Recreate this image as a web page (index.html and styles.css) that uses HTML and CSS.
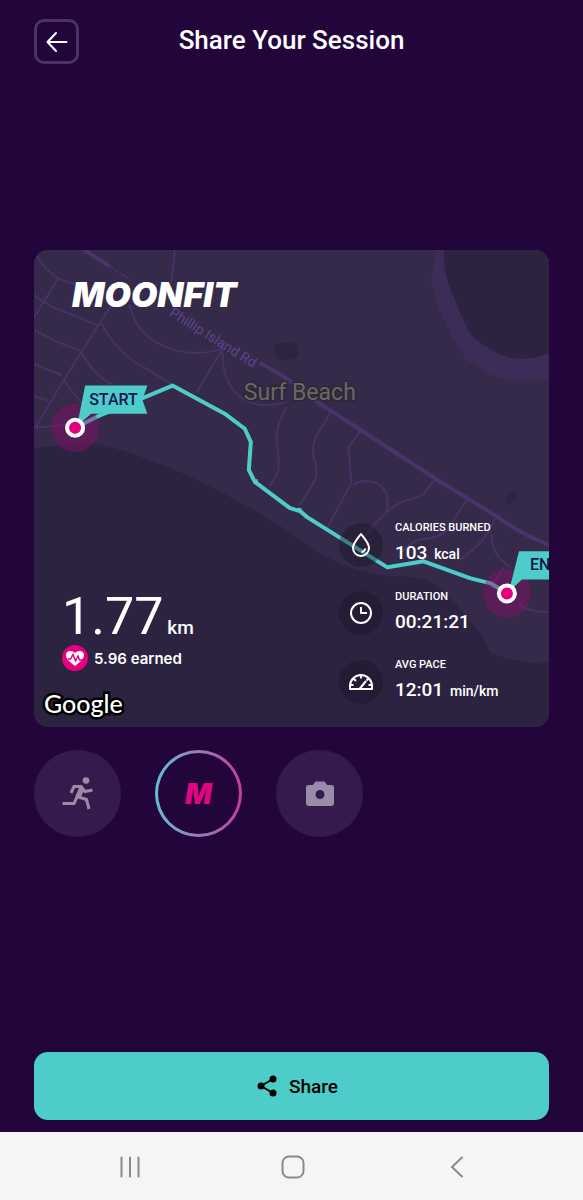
FILE: index.html
```html
<!DOCTYPE html>
<html lang="en">
<head>
    <meta charset="UTF-8">
    <meta name="viewport" content="width=device-width, initial-scale=1.0">
    <title>Share Your Session</title>
    <link rel="stylesheet" href="styles.css">
</head>
<body>

    <header class="header">
        <button class="back-btn" type="button" aria-label="Back">
            <svg width="24" height="24" viewBox="0 0 24 24"><path d="M21.5 12H2.5M11 3L2.5 12l8.500 9"/></svg>
        </button>
        <h1>Share Your Session</h1>
    </header>

    <main class="main">
        <!-- Session card -->
        <section class="card">
            <svg class="map" viewBox="0 0 515 475" preserveAspectRatio="xMidYMid slice">
                <!-- Water and park areas -->
                <path class="sea" d="M0 197L43 194Q60 191 80 197Q130 213 163 229Q209 251 256 281Q274 296 289 304Q320 321 356 325Q383 324 395 330Q414 341 429 362L446 382L456 402Q480 409 503 412L515 410V475H0Z"/>
                <path class="shore" d="M401 0L400 14L396 27L403 57L416 84L431 109L456 124Q470 130 486 131L515 128V0Z"/>
                <path class="sea" d="M409 0Q409 20 414 34L423 57L433 79Q436 86 444 91L456 99Q465 104 473 107Q484 109 493 108Q505 107 515 102V0Z"/>
                <rect class="pond" x="241" y="92" width="23" height="17" rx="7"/>
                <path class="pond" d="M471 253Q470 244 476 241Q482 239 482 245Q479 251 473 254Z"/>

                <!-- Roads -->
                <g class="roads">
                    <path d="M4 6Q19 31 43 34M26 27L0 69M0 44Q18 58 33 62L64 75M79 54Q64 76 48 102L31 129L3 176M0 79L23 91L48 101M0 113L29 125M0 145L15 150M0 177L34 174"/>
                    <path d="M68 73Q85 104 109 116Q129 128 139 134M48 102Q60 124 79 134M31 129Q40 145 54 157M141 0Q140 20 138 31"/>
                    <path d="M96 54Q104 90 143 100Q166 106 189 98L163 142M189 101Q188 131 206 146Q225 160 253 151M253 156Q240 177 243 194Q246 212 244 221L236 235"/>
                    <path d="M297 161L283 184Q277 194 280 207Q284 219 281 229L266 254M326 180L316 194Q313 198 315 206L317 232L293 277"/>
                    <path d="M319 234Q327 227 343 232Q357 241 352 261M400 229L389 243Q385 246 376 248Q360 253 353 261Q341 270 336 279L327 290M432 249L411 281Q400 288 386 288Q374 292 369 300M460 266Q459 276 443 294Q432 305 423 309M457 283Q457 306 476 316M469 316L456 336M483 352Q496 362 515 360"/>
                </g>
                <path class="main-road" d="M51 0L76 16M226 112L251 127L284 152L326 179L403 229L463 266Q484 282 515 294"/>
                <path class="dotted-road" d="M76 16L99 31"/>
                <text class="road-name" transform="translate(135 65) rotate(32)">Phillip Island Rd</text>
                <text class="place-name" x="210" y="149">Surf Beach</text>

                <!-- Route -->
                <path class="route" d="M42 177L66 165L108 148L139 135L191 163L211 178L217 191L215 219L221 231L256 257L266 260L273 266L353 316L389 310L436 327L456 332L472 342M221 231L224 230M265 260L266 257"/>
                <circle class="halo" cx="42" cy="177" r="24"/>
                <circle class="halo" cx="472" cy="342" r="24"/>
                <path class="flag" d="M52 135H114L109 149L114 163H58L44 175Z"/>
                <path class="flag" d="M484 300H546L541 314L546 328H487L474 340Z"/>
                <text class="flag-text" x="56" y="154">START</text>
                <text class="flag-text" x="495" y="319">END</text>
                <circle class="point" cx="42" cy="177" r="8"/>
                <circle class="point" cx="472" cy="342" r="8"/>
            </svg>

            <div class="overlay">
                <div class="summary">
                    <div class="logo">MOONFIT</div>
                    <p class="distance"><span class="number">1.77</span> <span class="unit">km</span></p>
                    <p class="earned">
                        <svg width="26" height="26" viewBox="0 0 26 26">
                            <circle cx="13" cy="13" r="13" fill="#e6007e"/>
                            <path d="M13 21C9 18 4 14 4 10C4 5.500 10 4.500 13 8C16 4.500 22 5.500 22 10C22 14 17 18 13 21Z" fill="#fff"/>
                            <path d="M6 14H8.500L11 9.500L13.500 16L16 11L17.500 15H22" fill="none" stroke="#e6007e" stroke-width="1.500"/>
                        </svg>
                        5.96 earned
                    </p>
                    <div class="google">Google</div>
                </div>

                <ul class="stats">
                    <li class="stat">
                        <span class="stat-icon">
                            <svg width="24" height="24" viewBox="0 0 24 24"><path d="M12 1C9 5 4 10 4 15A8 8 0 0 0 20 15C20 10 15 5 12 1ZM16.500 15.500Q15.500 18.500 12.500 19"/></svg>
                        </span>
                        <div>
                            <h2>Calories burned</h2>
                            <p>103 <small>kcal</small></p>
                        </div>
                    </li>
                    <li class="stat">
                        <span class="stat-icon">
                            <svg width="24" height="24" viewBox="0 0 24 24"><circle cx="12" cy="12" r="10"/><path d="M12 6V12H18"/></svg>
                        </span>
                        <div>
                            <h2>Duration</h2>
                            <p>00:21:21</p>
                        </div>
                    </li>
                    <li class="stat">
                        <span class="stat-icon">
                            <svg width="24" height="24" viewBox="0 0 24 24"><path d="M1 19V16A11 11 0 0 1 23 16V19ZM12 5V8.500M4.500 8.500L7 11M19.500 8.500L17.500 10.500M1 15H4.500M19.500 15H23M10.500 19L17 11"/></svg>
                        </span>
                        <div>
                            <h2>Avg pace</h2>
                            <p>12:01 <small>min/km</small></p>
                        </div>
                    </li>
                </ul>
            </div>
        </section>

        <!-- Background options -->
        <div class="options">
            <button class="option" type="button" aria-label="Activity">
                <svg width="35" height="38" viewBox="0 9 35 38">
                    <circle cx="26" cy="14.500" r="3.300" fill="currentColor"/>
                    <path d="M11 27L14 20.500H21L25 25.500L32.500 24M18 29L14 37.500H2.500M17 30.500L26.500 33.500L29 43" fill="none" stroke="currentColor" stroke-width="3"/>
                    <path d="M16 19.500L21.500 19L24.500 23L20.500 32L15 31L19 22Z" fill="currentColor"/>
                </svg>
            </button>
            <button class="option active" type="button" aria-label="MoonFit"><span class="mark">M</span></button>
            <button class="option" type="button" aria-label="Camera">
                <svg width="28" height="26" viewBox="0 0 28 26"><path fill="currentColor" fill-rule="evenodd" d="M3 4H7L9 1Q9.500 .5 10 .5H18Q18.500 .5 19 1L21 4H25Q28 4 28 7V22Q28 25 25 25H3Q0 25 0 22V7Q0 4 3 4ZM14 9A4.500 4.500 0 1 0 14 18A4.500 4.500 0 1 0 14 9Z"/></svg>
            </button>
        </div>
    </main>

    <footer class="footer">
        <button class="share-btn" type="button">
            <svg width="20" height="22" viewBox="0 0 20 22"><path d="M16 4L4 11L16 18" fill="none" stroke="#000" stroke-width="2"/><circle cx="16" cy="4" r="3.500"/><circle cx="4" cy="11" r="3.500"/><circle cx="16" cy="18" r="3.500"/></svg>
            Share
        </button>
    </footer>

    <!-- System navigation -->
    <nav class="navbar">
        <button type="button" aria-label="Recent apps"><svg width="24" height="24" viewBox="0 0 24 24"><path d="M3.500 2.500V21.500M12 2.500V21.500M20.500 2.500V21.500"/></svg></button>
        <button type="button" aria-label="Home"><svg width="24" height="24" viewBox="0 0 24 24"><rect x="1.500" y="1.500" width="21" height="21" rx="6.500"/></svg></button>
        <button type="button" aria-label="Go back"><svg width="24" height="24" viewBox="0 0 24 24"><path d="M17 2.500L7 12L17 21.500"/></svg></button>
    </nav>

</body>
</html>
```

FILE: styles.css
```css
/* Basic reset */
* {
    margin: 0;
    padding: 0;
    box-sizing: border-box;
}

body {
    min-height: 100vh;
    display: flex;
    flex-direction: column;
    background-color: #22063b;
    color: white;
    font-family: Roboto, sans-serif;
}

button {
    border: none;
    background: none;
    font-family: inherit;
    cursor: pointer;
}

svg {
    display: block;
}

/* Header */
.header {
    display: grid;
    grid-template-columns: 45px 1fr 45px;
    align-items: start;
    padding: 19px 34px 0;
}

.header h1 {
    font-size: 26px;
    font-weight: 500;
    line-height: 42px;
    text-align: center;
}

.back-btn {
    width: 45px;
    height: 45px;
    display: flex;
    justify-content: center;
    align-items: center;
    border: 3px solid #4b3363;
    border-radius: 10px;
}

.back-btn path {
    fill: none;
    stroke: white;
    stroke-width: 2;
    stroke-linecap: round;
    stroke-linejoin: round;
}

/* Session card */
.main {
    flex: 1;
    display: flex;
    flex-direction: column;
    justify-content: center;
    gap: 23px;
    padding: 0 34px 29px;
}

.card {
    display: grid;
    border-radius: 14px;
    overflow: hidden;
    background-color: #352a4a;
}

.map,
.overlay {
    grid-area: 1 / 1;
}

.map {
    width: 100%;
    height: 100%;
}

.sea {
    fill: #2c2340;
}

.shore {
    fill: #3c2d58;
}

.pond {
    fill: #2e2442;
}

.roads {
    fill: none;
    stroke: #443363;
    stroke-width: 2;
}

.main-road {
    fill: none;
    stroke: #47356a;
    stroke-width: 4;
}

.dotted-road {
    stroke: #47356a;
    stroke-width: 2;
    stroke-dasharray: 2 2;
}

.road-name {
    fill: #5a4689;
    font-size: 14px;
}

.place-name {
    fill: #6b6768;
    stroke: #2b2733;
    stroke-width: 3;
    paint-order: stroke;
    font-size: 23px;
}

.route {
    fill: none;
    stroke: #4eccc9;
    stroke-width: 4;
    stroke-linejoin: round;
}

.halo {
    fill: rgba(150, 10, 110, 0.4);
}

.flag {
    fill: #4eccc9;
}

.flag-text {
    fill: #1a1450;
    font-size: 16px;
    font-weight: 500;
}

.point {
    fill: #e6007e;
    stroke: white;
    stroke-width: 4;
}

/* Text over the map */
.overlay {
    position: relative;
    display: flex;
    justify-content: space-between;
}

.summary {
    display: flex;
    flex-direction: column;
    padding: 28px 0 8px 28px;
}

.logo {
    padding-left: 10px;
    margin-bottom: auto;
    font-family: Inter, sans-serif;
    font-size: 34px;
    font-weight: 900;
    font-style: italic;
    line-height: 34px;
}

.distance {
    line-height: 56px;
}

.number {
    font-size: 52px;
}

.unit {
    font-size: 19px;
    font-weight: 500;
}

.earned {
    display: flex;
    align-items: center;
    gap: 6px;
    font-family: Inter, sans-serif;
    font-size: 15px;
    font-weight: 600;
}

.distance + .earned {
    margin-top: -12px;
}

.google {
    margin: 16px 0 0 -20px;
    padding-left: 2px;
    font-family: Lato, sans-serif;
    font-size: 25px;
    font-weight: 500;
    line-height: 32px;
    -webkit-text-stroke: 5px black;
    paint-order: stroke fill;
}

.stats {
    width: 210px;
    display: flex;
    flex-direction: column;
    justify-content: flex-end;
    gap: 22px;
    padding: 271px 0 22px;
    list-style: none;
}

.stat {
    display: flex;
    align-items: center;
    gap: 12px;
}

.stat-icon {
    width: 44px;
    height: 44px;
    display: flex;
    justify-content: center;
    align-items: center;
    border-radius: 50%;
    background-color: rgba(25, 18, 35, 0.4);
}

.stat-icon svg {
    fill: none;
    stroke: white;
    stroke-width: 2;
    stroke-linejoin: round;
}

.stat h2 {
    font-size: 11px;
    font-weight: 500;
    line-height: 14px;
    text-transform: uppercase;
}

.stat p {
    margin-top: 4px;
    font-size: 19px;
    font-weight: 500;
    line-height: 28px;
}

.stat small {
    margin-left: 2px;
    font-size: 14px;
}

/* Background options */
.options {
    display: flex;
    gap: 34px;
}

.option {
    width: 87px;
    height: 87px;
    display: flex;
    justify-content: center;
    align-items: center;
    border-radius: 50%;
    background-color: #351b4d;
    color: #9a8ba6;
}

.option.active {
    border: 3px solid transparent;
    background:
        linear-gradient(#22063b, #22063b) padding-box,
        linear-gradient(90deg, #62c0d4, #c53d9a) border-box;
}

.mark {
    color: #e00580;
    font-family: Inter, sans-serif;
    font-size: 28px;
    font-weight: 900;
    font-style: italic;
}

/* Share button */
.footer {
    padding: 0 34px 12px;
}

.share-btn {
    width: 100%;
    height: 68px;
    display: flex;
    justify-content: center;
    align-items: center;
    gap: 12px;
    padding-left: 12px;
    border-radius: 14px;
    background-color: #4eccc9;
    color: black;
    font-size: 19px;
    font-weight: 500;
}

/* System navigation */
.navbar {
    height: 68px;
    display: flex;
    justify-content: space-around;
    align-items: center;
    padding: 2px 44px 0 48px;
    background-color: #f5f5f5;
}

.navbar svg {
    fill: none;
    stroke: #8a8a8a;
    stroke-width: 2;
    stroke-linecap: round;
}
```
